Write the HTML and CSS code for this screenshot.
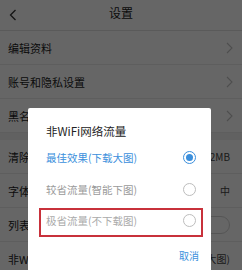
FILE: index.html
```html
<!DOCTYPE html>
<html lang="zh">
<head>
<meta charset="utf-8">
<link rel="stylesheet" href="styles.css">
</head>
<body>
<div class="page">
  <header class="topbar">
    <svg class="back" width="8" height="12" viewBox="0 0 8 12"><polyline points="6.5,1 1.5,6 6.5,11" fill="none" stroke="#333" stroke-width="1.3"/></svg>
    <div class="title">设置</div>
  </header>
  <div class="list">
    <div class="row"><span>编辑资料</span><svg class="chev" width="7" height="12" viewBox="0 0 7 12"><polyline points="1,1 6,6 1,11" fill="none" stroke="#c4c4c4" stroke-width="1.1"/></svg></div>
    <div class="row"><span>账号和隐私设置</span><svg class="chev" width="7" height="12" viewBox="0 0 7 12"><polyline points="1,1 6,6 1,11" fill="none" stroke="#c4c4c4" stroke-width="1.1"/></svg></div>
    <div class="row"><span>黑名单</span><svg class="chev" width="7" height="12" viewBox="0 0 7 12"><polyline points="1,1 6,6 1,11" fill="none" stroke="#c4c4c4" stroke-width="1.1"/></svg></div>
  </div>
  <div class="gap"></div>
  <div class="list">
    <div class="row"><span>清除缓存</span><span class="value">11.2MB</span></div>
    <div class="row"><span>字体大小</span><span class="value">中</span></div>
    <div class="row"><span>列表显示摘要</span><span class="toggle"></span></div>
    <div class="row"><span>非WiFi网络流量</span><span class="value">最佳效果(下载大图)</span></div>
  </div>
</div>
<div class="mask"></div>
<div class="dialog">
  <div class="d-title">非WiFi网络流量</div>
  <div class="opt active"><span>最佳效果(下载大图)</span><span class="radio on"></span></div>
  <div class="opt"><span>较省流量(智能下图)</span><span class="radio"></span></div>
  <div class="opt light marked"><span>极省流量(不下载图)</span><span class="radio"></span></div>
  <div class="d-foot"><span class="cancel">取消</span></div>
</div>
</body>
</html>
```

FILE: styles.css
```css
* { box-sizing: border-box; }
html, body { margin: 0; padding: 0; }
body {
  width: 242px;
  height: 270px;
  overflow: hidden;
  position: relative;
  background: #fff;
  font-family: "Noto Sans CJK SC", "Noto Sans", sans-serif;
  color: #222;
}
.page { display: flex; flex-direction: column; height: 270px; overflow: hidden; }
.topbar {
  flex: none;
  height: 31px;
  border-bottom: 1px solid #e2e2e2;
  display: flex;
  align-items: center;
  position: relative;
  padding-left: 9px;
  background: #fff;
}
.back { display: block; margin-top: -1px; }
.title {
  position: absolute;
  left: 0; right: 0; top: 0;
  line-height: 26px;
  text-align: center;
  font-size: 12px;
  color: #222;
}
.list { display: flex; flex-direction: column; flex: none; }
.row {
  flex: none;
  height: 34px;
  display: flex;
  align-items: center;
  justify-content: space-between;
  padding: 0 9px 0 8px;
  font-size: 11px;
  border-bottom: 1px solid #ececec;
  line-height: 14px;
}
.row .chev { display: block; }
.gap { flex: none; height: 7px; background: #f2f2f2; }
.value { font-size: 10px; color: #444; margin-right: 3px; }
.toggle {
  width: 32px; height: 18px;
  border: 1px solid #d5d5d5;
  border-radius: 9px;
  margin-right: 3px;
}
.mask {
  position: absolute;
  inset: 0;
  background: rgba(0,0,0,0.6);
}
.dialog {
  position: absolute;
  left: 28px;
  top: 108px;
  width: 183px;
  height: 162px;
  background: #fff;
  border-radius: 2px 2px 0 0;
  display: flex;
  flex-direction: column;
}
.d-title {
  padding: 16px 18px 4px;
  font-size: 11.5px;
  line-height: 14px;
  color: #222;
}
.opt {
  height: 31.5px;
  display: flex;
  align-items: center;
  justify-content: space-between;
  padding: 0 15px 0 18px;
  font-size: 10.5px;
  color: #9a9a9a;
  position: relative;
}
.opt.active { color: #3b8fdc; }
.opt.light { color: #aaa; }
.opt.marked::after {
  content: "";
  position: absolute;
  left: 11px; right: 8px; top: 3px; bottom: 0;
  border: 2px solid #c8313b;
}
.radio {
  width: 13px; height: 13px;
  border-radius: 50%;
  border: 1px solid #bdbdbd;
  display: flex;
  align-items: center;
  justify-content: center;
}
.radio.on { border-color: #3b8fdc; }
.radio.on::before {
  content: "";
  width: 7px; height: 7px;
  border-radius: 50%;
  background: #3b8fdc;
}
.d-foot {
  display: flex;
  justify-content: flex-end;
  padding: 12px 12px 0;
}
.cancel {
  font-size: 10px;
  line-height: 13px;
  color: #3b8fdc;
}
```
